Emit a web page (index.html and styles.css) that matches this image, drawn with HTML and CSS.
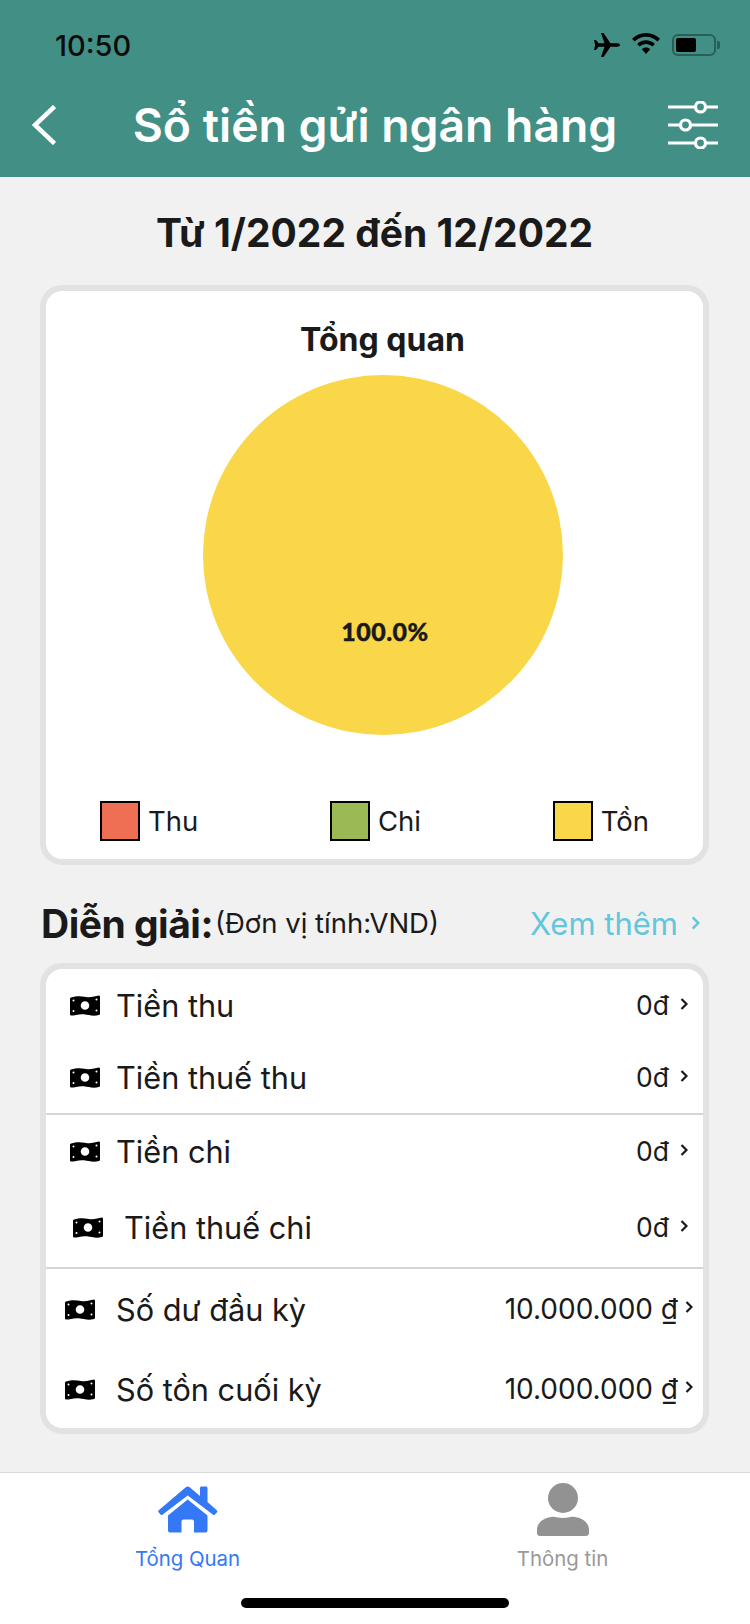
FILE: index.html
```html
<!DOCTYPE html>
<html lang="vi">
<head>
    <meta charset="UTF-8">
    <meta name="viewport" content="width=device-width, initial-scale=1.0">
    <title>Sổ tiền gửi ngân hàng</title>
    <link rel="stylesheet" href="styles.css">
</head>
<body>
    <svg class="defs" width="0" height="0">
        <symbol id="money" viewBox="0 0 30 21">
            <path fill-rule="evenodd" d="M1 2.500C7 .5 11 1 16 2C21 3 25 1 29 .5C30 .5 30 1.500 30 2.500V18.500C30 19.500 29.500 19.800 29 20C23 21.500 19 20 14 19.300C9 18.600 5 20.500 1 20.500C0 20.500 0 19.500 0 18.500V3.500C0 3 .5 2.700 1 2.500ZM15 6.200A4.300 4.300 0 1 0 15 14.800A4.300 4.300 0 1 0 15 6.200ZM3.500 4.500A1 1 0 1 0 3.500 6.500A1 1 0 1 0 3.500 4.500ZM26.500 3.500A1 1 0 1 0 26.500 5.500A1 1 0 1 0 26.500 3.500ZM3.500 15A1 1 0 1 0 3.500 17A1 1 0 1 0 3.500 15ZM26.500 14.500A1 1 0 1 0 26.500 16.500A1 1 0 1 0 26.500 14.500Z"/>
        </symbol>
        <symbol id="chevron" viewBox="0 0 8 12">
            <path d="M1.500 1L6.500 6L1.500 11" fill="none" stroke="currentColor" stroke-width="2.200"/>
        </symbol>
    </svg>

    <div class="screen">
        <header class="header">
            <div class="status-bar">
                <span class="time">10:50</span>
                <div class="status-icons">
                    <svg class="icon-plane" viewBox="0 0 27 24"><path d="M27 12C27 10.800 25.500 10.300 24 10.300H17.500L10.500 0H8L11.500 10.300H5.500L3 7H1L2.200 12L1 17H3L5.500 13.700H11.500L8 24H10.500L17.500 13.700H24C25.500 13.700 27 13.200 27 12Z"/></svg>
                    <svg class="icon-wifi" viewBox="0 0 28 21"><path d="M14 0C19.300 0 24.100 2.100 28 5.800L25.400 8.500C22.400 5.600 18.400 3.800 14 3.800S5.600 5.600 2.600 8.500L0 5.800C3.900 2.100 8.700 0 14 0ZM14 7.200C17.400 7.200 20.500 8.500 22.900 10.900L20.300 13.600C18.600 12 16.400 11 14 11S9.400 12 7.700 13.600L5.100 10.900C7.500 8.500 10.600 7.200 14 7.200ZM14 14.500C15.600 14.500 17 15.100 18.200 16.200L14 21L9.800 16.200C11 15.100 12.400 14.500 14 14.500Z"/></svg>
                    <div class="battery"><div class="battery-level"></div></div>
                </div>
            </div>
            <div class="title-bar">
                <svg class="icon-back" viewBox="0 0 24 40"><path d="M22.500 1.500L3 20L22.500 38.500" fill="none" stroke="#fff" stroke-width="4.500"/></svg>
                <h1>Sổ tiền gửi ngân hàng</h1>
                <svg class="icon-filter" viewBox="0 0 50 48" fill="none" stroke="#fff" stroke-width="3.200">
                    <path d="M0 6H27M38 6H50M0 24H12M23 24H50M0 42H27M38 42H50"/>
                    <circle cx="32.500" cy="6" r="5"/>
                    <circle cx="17.500" cy="24" r="5"/>
                    <circle cx="32.500" cy="42" r="5"/>
                </svg>
            </div>
        </header>

        <main class="content">
            <h2 class="period">Từ 1/2022 đến 12/2022</h2>

            <section class="card overview">
                <h3>Tổng quan</h3>
                <div class="pie">
                    <span class="pie-label">100.0%</span>
                </div>
                <div class="legend">
                    <div class="legend-item"><span class="swatch swatch-thu"></span>Thu</div>
                    <div class="legend-item"><span class="swatch swatch-chi"></span>Chi</div>
                    <div class="legend-item"><span class="swatch swatch-ton"></span>Tồn</div>
                </div>
            </section>

            <div class="section-head">
                <strong>Diễn giải:</strong>
                <span class="unit">(Đơn vị tính:VND)</span>
                <a class="more">Xem thêm <svg class="chevron-more"><use href="#chevron"/></svg></a>
            </div>

            <section class="card details">
                <div class="group">
                    <div class="row">
                        <svg class="money"><use href="#money"/></svg>
                        <span class="label">Tiền thu</span>
                        <span class="value">0đ</span>
                        <svg class="chevron"><use href="#chevron"/></svg>
                    </div>
                    <div class="row">
                        <svg class="money"><use href="#money"/></svg>
                        <span class="label">Tiền thuế thu</span>
                        <span class="value">0đ</span>
                        <svg class="chevron"><use href="#chevron"/></svg>
                    </div>
                </div>
                <div class="group">
                    <div class="row">
                        <svg class="money"><use href="#money"/></svg>
                        <span class="label">Tiền chi</span>
                        <span class="value">0đ</span>
                        <svg class="chevron"><use href="#chevron"/></svg>
                    </div>
                    <div class="row row-tall row-indent">
                        <svg class="money"><use href="#money"/></svg>
                        <span class="label">Tiền thuế chi</span>
                        <span class="value">0đ</span>
                        <svg class="chevron"><use href="#chevron"/></svg>
                    </div>
                </div>
                <div class="group">
                    <div class="row row-tall row-balance">
                        <svg class="money"><use href="#money"/></svg>
                        <span class="label">Số dư đầu kỳ</span>
                        <span class="value">10.000.000 ₫</span>
                        <svg class="chevron"><use href="#chevron"/></svg>
                    </div>
                    <div class="row row-tall row-balance">
                        <svg class="money"><use href="#money"/></svg>
                        <span class="label">Số tồn cuối kỳ</span>
                        <span class="value">10.000.000 ₫</span>
                        <svg class="chevron"><use href="#chevron"/></svg>
                    </div>
                </div>
            </section>
        </main>

        <nav class="tabbar">
            <div class="tab tab-active">
                <svg class="icon-home" viewBox="0 0 60 46"><path fill="#3478f6" d="M42 1.500C42 .7 42.700 0 43.500 0H48C48.800 0 49.500 .7 49.500 1.500V15.500L58.500 23.500C59.500 24.500 59.500 25.200 59 25.800L57 28C56.300 28.700 55.500 28.700 54.800 28L29.700 9L4.700 28C4 28.700 3.200 28.700 2.500 28L.6 25.800C0 25.200 0 24.500 1 23.500L27.500 1C29 -.3 30.500 -.3 32 1L42 9.500ZM29.700 13L49.500 29V44C49.500 45.200 48.700 46 47.500 46H36V35C36 34 35.200 33 34 33H25.500C24.300 33 23.500 34 23.500 35V46H12C10.800 46 10 45.200 10 44V29Z"/></svg>
                <span>Tổng Quan</span>
            </div>
            <div class="tab">
                <svg class="icon-user" viewBox="0 0 52 53"><circle cx="26" cy="15" r="15" fill="#929292"/><path fill="#929292" d="M14 34C18 33 21 35 26 35S34 33 38 34C46 35 52 40 52 47V50C52 52 50.500 53 49 53H3C1.500 53 0 52 0 50V47C0 40 6 35 14 34Z"/></svg>
                <span>Thông tin</span>
            </div>
            <div class="home-indicator"></div>
        </nav>
    </div>
</body>
</html>
```
FILE: styles.css
```css
* {
    box-sizing: border-box;
}
body {
    margin: 0;
    font-family: 'Inter', 'Liberation Sans', sans-serif;
    color: #1a1a1a;
    background-color: #f1f1f1;
}
.defs {
    position: absolute;
}
.screen {
    width: 750px;
    height: 1624px;
    display: flex;
    flex-direction: column;
    overflow: hidden;
}

/* header */
.header {
    height: 177px;
    background-color: #428f85;
}
.status-bar {
    height: 88px;
    padding: 2px 34px 0 55px;
    display: flex;
    align-items: center;
    justify-content: space-between;
}
.time {
    font-size: 29px;
    font-weight: 500;
    color: #0c0c0c;
}
.status-icons {
    display: flex;
    align-items: center;
}
.icon-plane {
    width: 27px;
    height: 24px;
    margin-right: 12px;
}
.icon-wifi {
    width: 28px;
    height: 21px;
    margin-right: 12px;
    margin-bottom: 3px;
}
.battery {
    position: relative;
    width: 44px;
    height: 22px;
    border: 2px solid #2a5f58;
    border-radius: 6px;
    padding: 2px;
}
.battery::after {
    content: '';
    position: absolute;
    right: -6px;
    top: 5px;
    width: 3px;
    height: 8px;
    background-color: #2a5f58;
    border-radius: 0 2px 2px 0;
}
.battery-level {
    width: 20px;
    height: 14px;
    background-color: #000;
    border-radius: 2px;
}
.title-bar {
    height: 89px;
    padding: 0 32px 16px;
    display: grid;
    grid-template-columns: 1fr auto 1fr;
    align-items: center;
}
.title-bar h1 {
    margin: 0;
    font-size: 46.300px;
    font-weight: 600;
    color: white;
}
.icon-back {
    width: 24px;
    height: 40px;
}
.icon-filter {
    width: 50px;
    height: 48px;
    justify-self: end;
}

/* content */
.content {
    flex: 1;
    padding: 0 41px 0 40px;
}
.period {
    margin: 0;
    padding-top: 4px;
    line-height: 104px;
    font-size: 39px;
    font-weight: 700;
    text-align: center;
}
.card {
    background: white;
    border: 6px solid #e2e2e2;
    border-radius: 22px;
}
.overview {
    height: 580px;
    padding-top: 29px;
}
.overview h3 {
    margin: 0;
    padding-left: 16px;
    line-height: 40px;
    font-size: 32px;
    font-weight: 700;
    text-align: center;
}
.pie {
    position: relative;
    width: 360px;
    height: 360px;
    margin: 15px 0 66px 157px;
    background-color: #f9d748;
    border-radius: 50%;
}
.pie-label {
    position: absolute;
    left: 4px;
    right: 0;
    top: 241px;
    line-height: 30px;
    font-family: 'Lato', sans-serif;
    font-size: 25px;
    font-weight: 900;
    letter-spacing: 0.5px;
    -webkit-text-stroke: 0.4px #1a1a1a;
    text-align: center;
}
.legend {
    padding: 0 54px;
    display: flex;
    justify-content: space-between;
}
.legend-item {
    display: flex;
    align-items: center;
    gap: 8px;
    font-size: 27.500px;
}
.swatch {
    width: 40px;
    height: 40px;
    border: 2px solid black;
}
.swatch-thu {
    background-color: #ef6f54;
}
.swatch-chi {
    background-color: #9bb955;
}
.swatch-ton {
    background-color: #f9d748;
}

.section-head {
    height: 98px;
    padding: 18px 0 0 1px;
    display: flex;
    align-items: center;
}
.section-head strong {
    font-size: 39px;
    font-weight: 700;
    letter-spacing: -0.5px;
}
.unit {
    margin-left: 2px;
    font-size: 27.500px;
}
.more {
    margin-left: auto;
    margin-right: 9px;
    display: flex;
    align-items: center;
    gap: 13px;
    font-size: 31px;
    color: #62c6dc;
}
.chevron-more {
    width: 9px;
    height: 16px;
}

.details {
    height: 471px;
}
.group + .group {
    border-top: 2px solid #d5d5d5;
}
.row {
    height: 72px;
    padding: 0 15px 0 24px;
    display: flex;
    align-items: center;
}
.row-tall {
    height: 80px;
}
.row-indent {
    padding-left: 27px;
}
.row-balance {
    padding-left: 19px;
    padding-right: 10px;
}
.money {
    width: 30px;
    height: 21px;
    flex-shrink: 0;
}
.label {
    margin-left: 16px;
    font-size: 30.700px;
}
.row-indent .label {
    margin-left: 21px;
}
.row-balance .label {
    margin-left: 21px;
}
.value {
    margin-left: auto;
    font-size: 26.500px;
}
.row-balance .value {
    font-size: 28px;
}
.chevron {
    width: 8px;
    height: 12px;
    margin-left: 11px;
    margin-bottom: 3px;
}
.row-balance .chevron {
    margin-left: 7px;
    margin-bottom: 5px;
}

/* tab bar */
.tabbar {
    position: relative;
    height: 152px;
    background: white;
    border-top: 1px solid #d9d9d9;
    display: grid;
    grid-template-columns: 1fr 1fr;
}
.tab {
    height: 98px;
    padding-top: 10px;
    display: flex;
    flex-direction: column;
    align-items: center;
    font-size: 20.400px;
    color: #999;
}
.tab svg {
    height: 53px;
    width: 60px;
}
.tab span {
    margin-top: 10px;
}
.tab-active {
    color: #3478f6;
}
.home-indicator {
    position: absolute;
    left: 241px;
    top: 125px;
    width: 268px;
    height: 10px;
    background-color: black;
    border-radius: 5px;
}
```
